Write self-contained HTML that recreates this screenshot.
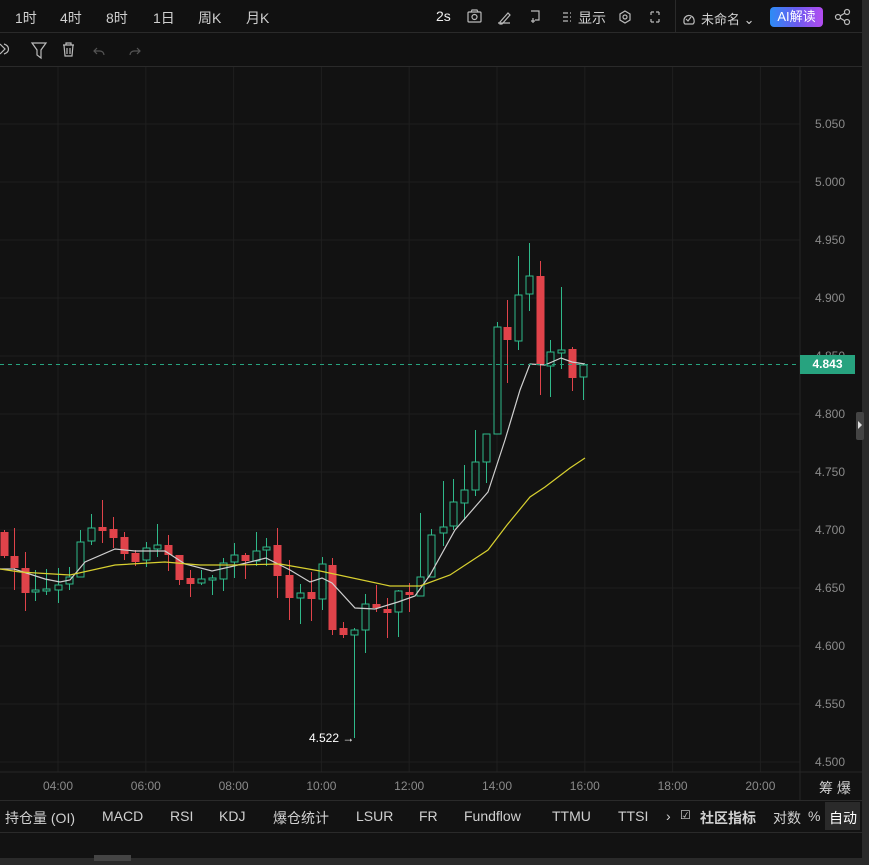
<!DOCTYPE html><html><head><meta charset="utf-8"><style>
*{margin:0;padding:0;box-sizing:border-box}
body{width:869px;height:865px;background:#121212;overflow:hidden;font-family:"Liberation Sans","Noto Sans CJK SC",sans-serif;color:#d6d6d6;position:relative}
.a{position:absolute;white-space:nowrap}
.t{font-size:14px;color:#d0d0d0}
</style></head><body>
<div class="a" style="left:0;top:0;width:862px;height:33px;border-bottom:1px solid #2a2a2a;background:#111"></div>
<div class="a" style="left:0;top:33px;width:862px;height:34px;border-bottom:1px solid #2a2a2a;background:#111"></div>
<div class="a" style="left:862px;top:0;width:7px;height:865px;background:#2a2a2a"></div>
<div class="a" style="left:856px;top:412px;width:8px;height:28px;background:#444;border-radius:2px"></div>
<div class="a" style="left:858px;top:421px;width:0;height:0;border-left:4px solid #ddd;border-top:4px solid transparent;border-bottom:4px solid transparent"></div>
<div class="a t" style="left:15px;top:8px">1时</div>
<div class="a t" style="left:60px;top:8px">4时</div>
<div class="a t" style="left:106px;top:8px">8时</div>
<div class="a t" style="left:153px;top:8px">1日</div>
<div class="a t" style="left:198px;top:8px">周K</div>
<div class="a t" style="left:246px;top:8px">月K</div>
<div class="a t" style="left:436px;top:8px;color:#eee">2s</div>
<div class="a t" style="left:578px;top:8px">显示</div>
<div class="a" style="left:675px;top:0;width:1px;height:33px;background:#2a2a2a"></div>
<div class="a t" style="left:701px;top:9px;font-size:13px">未命名 ⌄</div>
<div class="a" style="left:770px;top:7px;width:53px;height:20px;border-radius:4px;background:linear-gradient(90deg,#2d8cf5,#6a5cf0,#b44cf0);color:#fff;font-size:13px;text-align:center;line-height:20px">AI解读</div>
<svg class="a" style="left:0;top:0" width="869" height="66" fill="none" stroke="#bbb" stroke-width="1.2">
<rect x="468" y="12" width="13" height="10" rx="1"/><circle cx="474.5" cy="17" r="2.5"/><path d="M471 12l1-2h5l1 2"/>
<path d="M500 22l8-9 2 2-8 9h-2zM498 23h12"/>
<path d="M531 11h8v9h-4M533 18v5M531 21h4"/>
<path d="M563 13h5M563 17h5M563 21h5M570 13h1M570 17h1M570 21h1"/>
<path d="M625 11l5 3v6l-5 3-5-3v-6z"/><circle cx="625" cy="17" r="2"/>
<path d="M651 12h3M651 12v3M659 12h-3M659 12v3M651 22h3M651 22v-3M659 22h-3M659 22v-3"/>
<path d="M684 21a5 5 0 1 1 10-1a4 4 0 0 1-1 4h-8a3 3 0 0 1-1-3z"/><path d="M686 19l2 2 3-4"/>
<circle cx="847" cy="12" r="2.5"/><circle cx="847" cy="22" r="2.5"/><circle cx="838" cy="17" r="2.5"/><path d="M840 16l5-3M840 18l5 3"/>
<path d="M0 44l5 5-5 5M4 44c6 2 6 8 0 10"/>
<path d="M32 43h14l-5 7v8l-4-3v-5z"/>
<path d="M63 45h11M66 45v-2h5v2M64 45l1 11h7l1-11M67 48v6M70 48v6"/>
<path d="M97 48l-3 3 3 3M94 51h6a4 4 0 0 1 4 4" stroke="#555"/>
<path d="M137 48l3 3-3 3M140 51h-6a4 4 0 0 0-4 4" stroke="#555"/>
</svg>
<svg id="c" class="a" style="left:0;top:67px" width="862" height="733"></svg>
<div class="a" style="left:800px;top:355px;width:55px;height:19px;background:#27a37f;color:#fff;font-size:12px;font-weight:bold;text-align:center;line-height:19px">4.843</div>
<div class="a" style="left:0;top:800px;width:862px;height:1px;background:#2a2a2a"></div>
<div class="a" style="left:0;top:832px;width:862px;height:1px;background:#2a2a2a"></div>
<div class="a" style="left:0;top:858px;width:862px;height:7px;background:#2a2a2a"></div>
<div class="a" style="left:94px;top:855px;width:37px;height:6px;background:#444"></div>
<div class="a t" style="left:5px;top:808px">持仓量 (OI)</div>
<div class="a t" style="left:102px;top:808px">MACD</div>
<div class="a t" style="left:170px;top:808px">RSI</div>
<div class="a t" style="left:219px;top:808px">KDJ</div>
<div class="a t" style="left:273px;top:808px">爆仓统计</div>
<div class="a t" style="left:356px;top:808px">LSUR</div>
<div class="a t" style="left:419px;top:808px">FR</div>
<div class="a t" style="left:464px;top:808px">Fundflow</div>
<div class="a t" style="left:552px;top:808px">TTMU</div>
<div class="a t" style="left:618px;top:808px">TTSI</div>
<div class="a t" style="left:666px;top:808px">›</div>
<div class="a t" style="left:680px;top:808px;font-size:12px">☑</div>
<div class="a t" style="left:700px;top:808px;font-weight:bold">社区指标</div>
<div class="a t" style="left:773px;top:808px">对数</div>
<div class="a t" style="left:808px;top:808px">%</div>
<div class="a" style="left:825px;top:802px;width:35px;height:28px;background:#2a2a2a"></div>
<div class="a t" style="left:829px;top:808px;color:#fff">自动</div>
<div class="a t" style="left:819px;top:778px">筹 爆</div>
<script>
var s='',O=67;
function Y(p){return 124+(5.05-p)/0.05*58-O}
for(var k=0;k<12;k++){var p=5.05-k*0.05,y=Y(p);s+='<line x1="0" x2="800" y1="'+y+'" y2="'+y+'" stroke="#1f1f1f"/>';s+='<text x="815" y="'+(y+4)+'" fill="#8a8a8a" font-size="12" font-family="Liberation Sans">'+p.toFixed(3)+'</text>';}
var tl=['04:00','06:00','08:00','10:00','12:00','14:00','16:00','18:00','20:00'];
for(var k=0;k<9;k++){var x=58+87.8*k;s+='<line x1="'+x+'" x2="'+x+'" y1="0" y2="705" stroke="#1f1f1f"/><text x="'+x+'" y="723" fill="#8a8a8a" font-size="12" text-anchor="middle" font-family="Liberation Sans">'+tl[k]+'</text>';}
s+='<line x1="800" x2="800" y1="0" y2="733" stroke="#262626"/><line x1="0" x2="862" y1="705" y2="705" stroke="#262626"/>';
var C=[[4,'r',532,556,530,558],[14,'r',556,568,528,590],[25,'r',568,593,552,611],[35,'g',590,592,570,601],[46,'g',589,591,569,595],[58,'g',585,590,568,603],[69,'g',577,584,567,590],[80,'g',542,577,530,577],[91,'g',528,541,514,545],[102,'r',527,531,500,543],[113,'r',529,538,517,548],[124,'r',537,554,532,560],[135,'r',553,562,550,566],[146,'g',548,560,542,567],[157,'g',545,549,524,557],[168,'r',545,555,535,571],[179,'r',555,580,555,585],[190,'r',578,584,570,597],[201,'g',579,583,570,585],[212,'g',578,580,575,595],[223,'g',563,579,558,591],[234,'g',555,562,543,578],[245,'r',555,561,553,579],[256,'g',551,561,532,566],[266,'g',547,550,538,566],[277,'r',545,576,528,598],[289,'r',575,598,560,620],[300,'g',593,598,584,624],[311,'r',592,599,572,621],[322,'g',564,599,557,610],[332,'r',565,630,558,635],[343,'r',628,635,622,638],[354,'g',630,635,628,738],[365,'g',604,630,594,653],[376,'r',604,608,585,612],[387,'r',609,613,598,638],[398,'g',591,612,590,637],[409,'r',592,595,583,612],[420,'g',577,596,513,596],[431,'g',535,577,529,577],[443,'g',527,533,481,546],[453,'g',502,526,479,530],[464,'g',490,503,465,520],[475,'g',462,490,430,496],[486,'g',434,462,434,483],[497,'g',327,434,322,434],[507,'r',327,340,300,383],[518,'g',295,341,256,350],[529,'g',276,294,243,311],[540,'r',276,365,261,395],[550,'g',352,366,340,397],[561,'g',350,353,287,369],[572,'r',349,378,347,391],[583,'g',365,377,364,400]];
C.forEach(function(c){var x=c[0],g=c[1]=='g',col=g?'#2fb98a':'#e0434a';
s+='<line x1="'+(x+.5)+'" x2="'+(x+.5)+'" y1="'+(c[4]-O)+'" y2="'+(c[5]-O)+'" stroke="'+col+'"/>';
var h=Math.max(c[3]-c[2],2);
if(g)s+='<rect x="'+(x-3)+'" y="'+(c[2]-O)+'" width="7" height="'+h+'" fill="#121212" stroke="'+col+'"/>';
else s+='<rect x="'+(x-3.5)+'" y="'+(c[2]-O)+'" width="8" height="'+h+'" fill="'+col+'"/>';});
function L(a,col){return '<polyline fill="none" stroke="'+col+'" stroke-width="1.2" points="'+a.map(function(q){return q[0]+','+(q[1]-O)}).join(' ')+'"/>'}
s+=L([[0,569],[14,569],[45,579],[60,582],[70,580],[85,562],[115,549],[135,551],[165,551],[185,564],[212,571],[234,566],[266,558],[290,570],[310,582],[322,578],[332,583],[355,608],[375,609],[398,602],[415,596],[430,575],[455,530],[488,492],[505,440],[520,390],[530,364],[545,365],[561,358],[572,362],[585,364]],'#cfcfcf');
s+=L([[0,569],[20,572],[70,575],[115,565],[165,562],[200,565],[234,565],[280,564],[320,571],[390,586],[420,586],[450,575],[488,550],[507,525],[530,497],[545,487],[570,468],[585,458]],'#d8d030');
s+='<line x1="0" x2="800" y1="'+(364.5-O)+'" y2="'+(364.5-O)+'" stroke="#27a37f" stroke-dasharray="4 4"/>';
s+='<text x="309" y="'+(742-O)+'" fill="#fff" font-size="12" font-family="Liberation Sans">4.522 →</text>';
document.getElementById('c').innerHTML=s;
</script>
</body></html>
